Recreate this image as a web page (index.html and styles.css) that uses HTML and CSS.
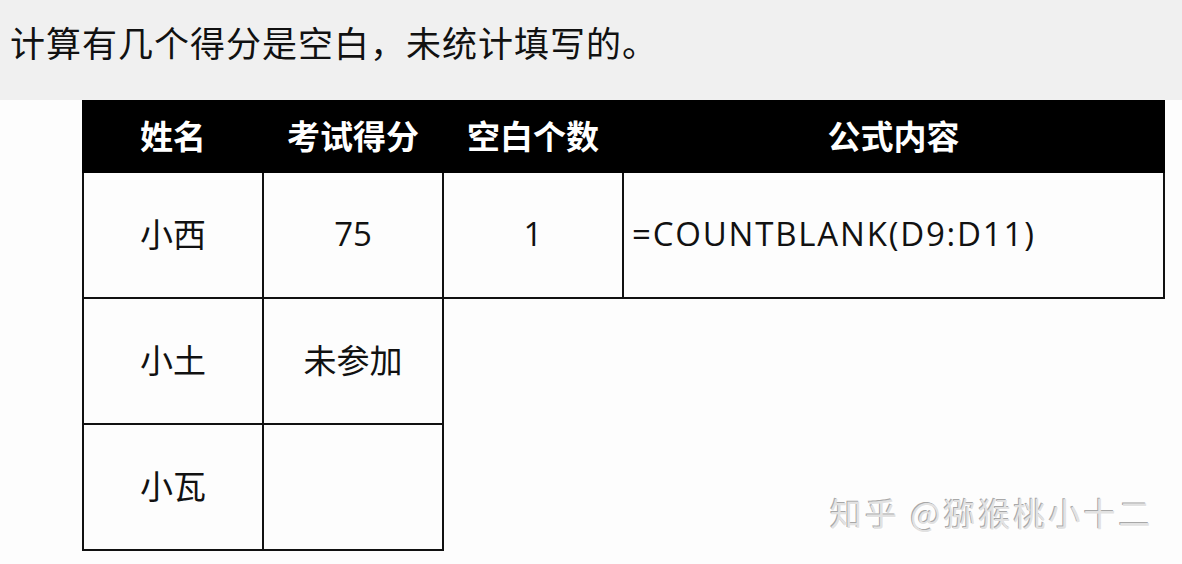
FILE: index.html
```html
<!DOCTYPE html>
<html lang="zh">
<head>
<meta charset="utf-8">
<link rel="stylesheet" href="styles.css">
</head>
<body>
<div class="page">
  <div class="band">
    <p class="title">计算有几个得分是空白，未统计填写的。</p>
  </div>
  <div class="content">
    <table class="sheet">
      <colgroup>
        <col class="c1"><col class="c2"><col class="c3"><col class="c4">
      </colgroup>
      <thead>
        <tr><th>姓名</th><th>考试得分</th><th>空白个数</th><th>公式内容</th></tr>
      </thead>
      <tbody>
        <tr><td>小西</td><td>75</td><td>1</td><td class="formula">=COUNTBLANK(D9:D11)</td></tr>
        <tr><td>小土</td><td>未参加</td></tr>
        <tr><td>小瓦</td><td></td></tr>
      </tbody>
    </table>
    <div class="watermark">知乎 @猕猴桃小十二</div>
  </div>
</div>
</body>
</html>
```

FILE: styles.css
```css
* { box-sizing: border-box; }
html, body {
  margin: 0;
  padding: 0;
  background: #fdfdfd;
}
.page {
  width: 1182px;
  height: 564px;
  overflow: hidden;
  font-family: "Open Sans", "Noto Sans CJK SC", sans-serif;
  color: #111;
}
.band {
  height: 100px;
  background: #f0f0f0;
  padding: 17px 0 0 10px;
}
.title {
  margin: 0;
  font-family: "Noto Sans CJK SC", sans-serif;
  font-size: 35px;
  letter-spacing: 1px;
  line-height: 50px;
  color: #111;
}
.content {
  position: relative;
  padding-left: 82px;
}
.sheet {
  border-collapse: collapse;
  table-layout: fixed;
  width: 1081px;
}
.c1, .c2, .c3 { width: 180px; }
.c4 { width: 541px; }
.sheet th {
  background: #000;
  color: #fff;
  height: 71px;
  font-family: "Noto Sans CJK SC", sans-serif;
  font-weight: 700;
  font-size: 33px;
  padding: 0 0 4px;
  border: 2px solid #000;
  text-align: center;
}
.sheet td {
  border: 2px solid #111;
  height: 126px;
  font-size: 33px;
  font-family: "Open Sans", "Noto Sans CJK SC", sans-serif;
  text-align: center;
  padding: 0 0 4px;
  background: #fdfdfd;
}
.sheet td.formula {
  text-align: left;
  padding-left: 8px;
  font-size: 33px;
  letter-spacing: 1.8px;
}
.watermark {
  position: absolute;
  left: 830px;
  top: 389px;
  font-family: "Noto Sans CJK SC", sans-serif;
  font-size: 32px;
  color: #e2e2e2;
  text-shadow: -1px -1px 0 #a8a8a8, 1px 1px 0 #ffffff;
  letter-spacing: 3px;
}
```
